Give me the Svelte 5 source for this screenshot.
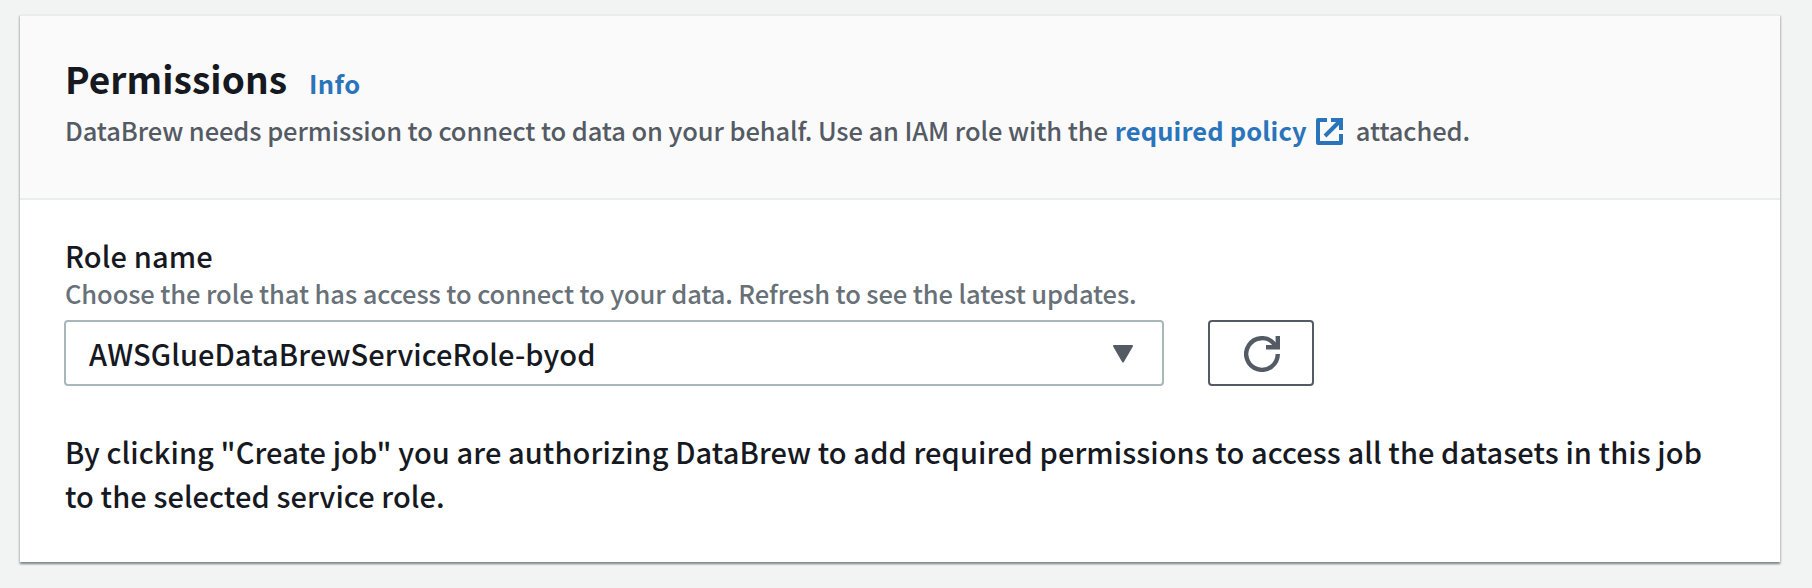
<script>
  let role = $state('AWSGlueDataBrewServiceRole-byod');
</script>

<main class="page">
  <section class="card">
    <header class="head">
      <div class="title-row">
        <h2>Permissions</h2>
        <a class="info" href="#info">Info</a>
      </div>
      <p class="desc">
        <span class="lead">DataBrew needs permission to connect to data on your behalf. Use an IAM role with the</span>
        <a class="policy" href="#policy">required policy</a>
        <svg class="ext" viewBox="0 0 27 27" fill="none" stroke="currentColor" stroke-width="4">
          <path d="M11 2H2V25H25V16" stroke-linejoin="round" />
          <path d="M15 2H25V12M25 2L9 18" />
        </svg>
        <span>attached.</span>
      </p>
    </header>
    <div class="body">
      <div class="label">Role name</div>
      <div class="hint">Choose the role that has access to connect to your data. Refresh to see the latest updates.</div>
      <div class="controls">
        <div class="select" role="button" tabindex="0">
          <span>{role}</span>
          <svg class="caret" viewBox="0 0 22 18"><path d="M2 1H20L11 16.5Z" fill="currentColor" stroke="currentColor" stroke-width="2" stroke-linejoin="round" /></svg>
        </div>
        <button class="refresh" aria-label="Refresh">
          <svg viewBox="0 0 36 36" fill="none" stroke="currentColor" stroke-width="4.4">
            <path d="M33.8 18A15.8 15.8 0 1 1 30 7.7L33 11" />
            <path d="M33.8 0V11.3H22" />
          </svg>
        </button>
      </div>
      <p class="note">
        <span>By clicking "Create job" you are authorizing DataBrew to add required permissions to access all the datasets in this job</span><br />
        <span>to the selected service role.</span>
      </p>
    </div>
  </section>
</main>

<style>
  :global(body) { background: #f2f3f3; }
  .page {
    box-sizing: border-box;
    height: 588px;
    padding: 14px 32px 26px 20px;
    overflow: hidden;
    font-family: 'Noto Sans CJK SC', 'Noto Sans', sans-serif;
    font-weight: 500;
    color: #16191f;
    white-space: nowrap;
  }
  .card {
    box-sizing: border-box;
    height: 548px;
    background: #fff;
    border-top: 2px solid #eaeded;
    box-shadow: 0 2px 2px 0 rgba(0, 28, 36, 0.3), 1px 2px 2px 0 rgba(0, 28, 36, 0.15), -1px 2px 2px 0 rgba(0, 28, 36, 0.15);
  }
  .head {
    box-sizing: border-box;
    height: 184px;
    padding: 40px 44px 0 45px;
    background: #fafafa;
    border-bottom: 2px solid #eaeded;
  }
  .title-row { display: flex; align-items: baseline; gap: 22px; height: 44px; }
  h2 { margin: 0; font-size: 37px; line-height: 44px; font-weight: 700; letter-spacing: 0.06px; }
  a { color: #2a74bb; font-weight: 700; text-decoration: none; }
  .info { font-size: 25.5px; line-height: 36px; letter-spacing: 0.4px; }
  .desc {
    display: flex;
    align-items: center;
    margin: 11px 0 0;
    font-size: 25.5px;
    line-height: 36px;
    letter-spacing: -0.09px;
    color: #545b64;
  }
  .lead { margin-right: 7px; }
  .policy { padding-top: 1px; letter-spacing: 0.12px; }
  .ext { width: 27px; height: 27px; margin: 4px 13px 0 9px; color: #2a74bb; }
  .body { padding: 37px 44px 0; }
  .label { padding-left: 1px; font-size: 29px; line-height: 36px; letter-spacing: 0.12px; }
  .hint { margin-top: 2px; padding-left: 1px; font-size: 25.5px; line-height: 36px; letter-spacing: -0.1px; color: #687078; }
  .controls { display: flex; gap: 44px; margin-top: 9px; }
  .select {
    box-sizing: border-box;
    display: flex;
    align-items: center;
    justify-content: space-between;
    width: 1100px;
    height: 66px;
    padding: 0 28px 0 23px;
    border: 2px solid #aab7b8;
    border-radius: 4px;
    font-size: 29px;
    line-height: 60px;
    letter-spacing: 0.1px;
  }
  .caret { width: 22px; height: 18px; margin-top: 2px; color: #545b64; }
  .refresh {
    box-sizing: border-box;
    display: flex;
    align-items: center;
    justify-content: center;
    width: 106px;
    height: 66px;
    padding: 2px 0 0 2px;
    border: 2px solid #545b64;
    border-radius: 4px;
    background: #fff;
    color: #545b64;
  }
  .refresh svg { width: 36px; height: 36px; }
  .note { margin: 43px 0 0; padding-left: 1px; font-size: 29px; line-height: 44px; letter-spacing: 0.085px; }
</style>
